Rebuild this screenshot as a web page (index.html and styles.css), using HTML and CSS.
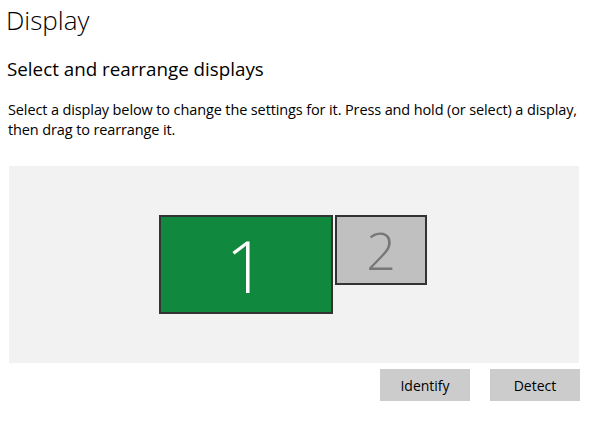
FILE: index.html
```html
<!DOCTYPE html>
<html>
<head>
<meta charset="utf-8">
<link rel="stylesheet" href="styles.css">
</head>
<body>
<div class="page">
  <h1 class="title">Display</h1>
  <h2 class="subtitle">Select and rearrange displays</h2>
  <p class="desc">Select a display below to change the settings for it. Press and hold (or select) a display, then drag to rearrange it.</p>
  <div class="canvas">
    <div class="monitor primary"><span>1</span></div>
    <div class="monitor secondary"><span>2</span></div>
  </div>
  <div class="actions">
    <button class="btn">Identify</button>
    <button class="btn">Detect</button>
  </div>
</div>
</body>
</html>
```
FILE: styles.css
```css
html, body {
  margin: 0;
  padding: 0;
  background: #ffffff;
}
body {
  font-family: "Open Sans", "Noto Sans", "Liberation Sans", sans-serif;
  color: #000;
}
.page {
  width: 595px;
  height: 423px;
  overflow: hidden;
}
.title {
  margin: 0;
  padding: 3px 0 0 6px;
  font-size: 26px;
  font-weight: 300;
  line-height: 34px;
  color: #000;
}
.subtitle {
  margin: 0;
  padding: 19px 0 0 7px;
  font-size: 18.8px;
  font-weight: 400;
  line-height: 26px;
  color: #000;
}
.desc {
  margin: 0;
  padding: 18px 0 0 8px;
  width: 578px;
  font-size: 14.5px;
  line-height: 20px;
  letter-spacing: -0.12px;
  color: #000;
}
.canvas {
  position: relative;
  margin: 26px 0 0 9px;
  width: 570px;
  height: 197px;
  background: #f2f2f2;
}
.monitor {
  position: absolute;
  box-sizing: border-box;
  border: 2px solid #333333;
  display: flex;
  align-items: center;
  justify-content: center;
  font-weight: 300;
  line-height: 1;
}
.primary {
  left: 150px;
  top: 49px;
  width: 174px;
  height: 99px;
  background: #10893e;
  color: #ffffff;
  font-size: 72px;
}
.secondary {
  left: 326px;
  top: 49px;
  width: 92px;
  height: 70px;
  background: #c0c0c0;
  color: #777777;
  font-size: 52px;
}
.actions {
  display: flex;
  justify-content: flex-end;
  gap: 20px;
  width: 580px;
  margin-top: 6px;
}
.btn {
  width: 90px;
  height: 32px;
  border: none;
  background: #cccccc;
  font-family: "Open Sans", "Noto Sans", "Liberation Sans", sans-serif;
  font-size: 14px;
  color: #000;
  padding: 0;
}
```
